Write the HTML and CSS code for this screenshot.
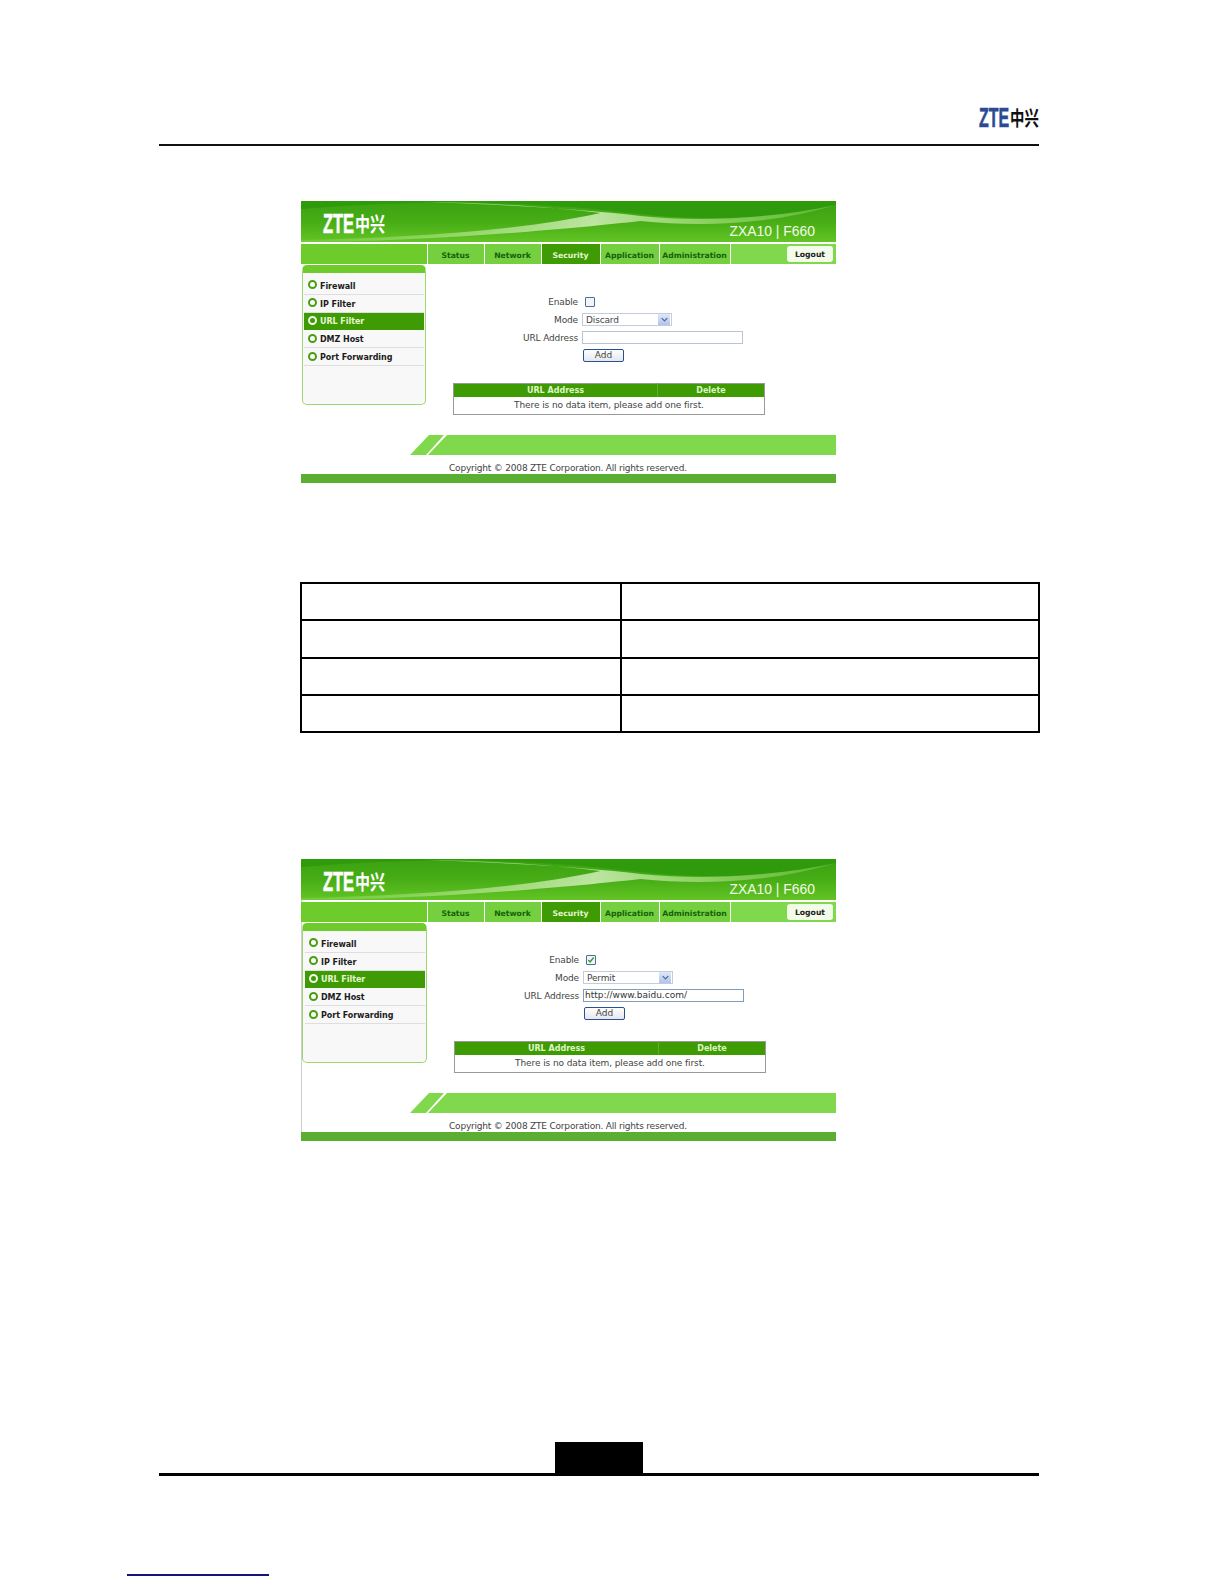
FILE: index.html
```html
<!DOCTYPE html>
<html lang="en">
<head>
<meta charset="utf-8">
<title>URL Filter</title>
<link rel="stylesheet" href="styles.css">
</head>
<body>
<div class="page">
  <header class="doc-head">
    <div class="logo doc-logo"><span class="logo-en">ZTE</span><span class="logo-cn">中兴</span></div>
  </header>

  <section class="shot shot-first">
    <div class="banner">
      <svg class="swoosh" viewBox="0 0 536 41" preserveAspectRatio="none" aria-hidden="true">
        <defs><linearGradient id="glossA" x1="0" x2="1" y1="0" y2="0"><stop offset="0" stop-color="#cdf2a8" stop-opacity=".15"/><stop offset=".55" stop-color="#e4f8cf" stop-opacity=".75"/><stop offset=".8" stop-color="#cdf2a8" stop-opacity=".45"/><stop offset="1" stop-color="#cdf2a8" stop-opacity=".2"/></linearGradient></defs>
        <path d="M0 8 C120 -2 230 0 320 11 C390 20 460 20 536 4 L536 0 L0 0Z" fill="#2f9a0c"/>
        <path d="M0 39 C100 37 220 30 300 12 C250 6 180 1 120 1 C190 3 280 8 340 15 C400 21 470 18 536 4 C470 24 400 26 340 20 C270 28 120 41 0 41Z" fill="url(#glossA)"/>
      </svg>
      <div class="logo brand"><span class="logo-en">ZTE</span><span class="logo-cn">中兴</span></div>
      <div class="model">ZXA10 | F660</div>
    </div>
    <nav class="nav">
      <div class="nav-lead"></div>
      <a class="tab tab-status">Status</a>
      <a class="tab tab-network">Network</a>
      <a class="tab tab-security active">Security</a>
      <a class="tab tab-application">Application</a>
      <a class="tab tab-admin">Administration</a>
      <div class="nav-rest"><button class="logout" type="button">Logout</button></div>
    </nav>
    <div class="content">
      <aside class="side">
        <ul class="menu">
          <li class="menu-item"><i class="ring"></i>Firewall</li>
          <li class="menu-item"><i class="ring"></i>IP Filter</li>
          <li class="menu-item current"><i class="ring"></i>URL Filter</li>
          <li class="menu-item"><i class="ring"></i>DMZ Host</li>
          <li class="menu-item"><i class="ring"></i>Port Forwarding</li>
        </ul>
      </aside>
      <main class="main">
        <div class="form">
          <label class="lbl">Enable</label>
          <div class="ctl"><span class="check"></span></div>
          <label class="lbl">Mode</label>
          <div class="ctl"><div class="select"><span>Discard</span><span class="arrow"><svg viewBox="0 0 10 6" width="7" height="5"><path d="M1 1l4 4 4-4" fill="none" stroke="#4a6aa5" stroke-width="1.8"/></svg></span></div></div>
          <label class="lbl">URL Address</label>
          <div class="ctl"><div class="text-input"></div></div>
          <span></span>
          <div class="ctl"><button class="add" type="button">Add</button></div>
        </div>
        <table class="rules">
          <thead><tr><th class="col-url">URL Address</th><th>Delete</th></tr></thead>
          <tbody><tr><td colspan="2">There is no data item, please add one first.</td></tr></tbody>
        </table>
      </main>
    </div>
    <div class="stripe">
      <svg viewBox="0 0 426 20" width="426" height="20" aria-hidden="true">
        <path d="M0 20L19 0H34L16 20Z" fill="#80d84c"/>
        <path d="M18 20L37 0H426V20Z" fill="#80d84c"/>
      </svg>
    </div>
    <div class="copy">Copyright © 2008 ZTE Corporation. All rights reserved.</div>
    <div class="base"></div>
  </section>

  <table class="data">
    <tr class="thin"><td class="data-a"></td><td></td></tr>
    <tr><td class="data-a"></td><td></td></tr>
    <tr><td class="data-a"></td><td></td></tr>
    <tr><td class="data-a"></td><td></td></tr>
  </table>

  <section class="shot shot-second">
    <div class="banner">
      <svg class="swoosh" viewBox="0 0 536 41" preserveAspectRatio="none" aria-hidden="true">
        <defs><linearGradient id="glossB" x1="0" x2="1" y1="0" y2="0"><stop offset="0" stop-color="#cdf2a8" stop-opacity=".15"/><stop offset=".55" stop-color="#e4f8cf" stop-opacity=".75"/><stop offset=".8" stop-color="#cdf2a8" stop-opacity=".45"/><stop offset="1" stop-color="#cdf2a8" stop-opacity=".2"/></linearGradient></defs>
        <path d="M0 8 C120 -2 230 0 320 11 C390 20 460 20 536 4 L536 0 L0 0Z" fill="#2f9a0c"/>
        <path d="M0 39 C100 37 220 30 300 12 C250 6 180 1 120 1 C190 3 280 8 340 15 C400 21 470 18 536 4 C470 24 400 26 340 20 C270 28 120 41 0 41Z" fill="url(#glossB)"/>
      </svg>
      <div class="logo brand"><span class="logo-en">ZTE</span><span class="logo-cn">中兴</span></div>
      <div class="model">ZXA10 | F660</div>
    </div>
    <nav class="nav">
      <div class="nav-lead"></div>
      <a class="tab tab-status">Status</a>
      <a class="tab tab-network">Network</a>
      <a class="tab tab-security active">Security</a>
      <a class="tab tab-application">Application</a>
      <a class="tab tab-admin">Administration</a>
      <div class="nav-rest"><button class="logout" type="button">Logout</button></div>
    </nav>
    <div class="content">
      <aside class="side">
        <ul class="menu">
          <li class="menu-item"><i class="ring"></i>Firewall</li>
          <li class="menu-item"><i class="ring"></i>IP Filter</li>
          <li class="menu-item current"><i class="ring"></i>URL Filter</li>
          <li class="menu-item"><i class="ring"></i>DMZ Host</li>
          <li class="menu-item"><i class="ring"></i>Port Forwarding</li>
        </ul>
      </aside>
      <main class="main">
        <div class="form">
          <label class="lbl">Enable</label>
          <div class="ctl"><span class="check"><svg viewBox="0 0 9 9" width="8" height="8"><path d="M1.5 4.5l2 2.2 4-5" fill="none" stroke="#2f9a2c" stroke-width="1.6"/></svg></span></div>
          <label class="lbl">Mode</label>
          <div class="ctl"><div class="select"><span>Permit</span><span class="arrow"><svg viewBox="0 0 10 6" width="7" height="5"><path d="M1 1l4 4 4-4" fill="none" stroke="#4a6aa5" stroke-width="1.8"/></svg></span></div></div>
          <label class="lbl">URL Address</label>
          <div class="ctl"><div class="text-input filled">http://www.baidu.com/</div></div>
          <span></span>
          <div class="ctl"><button class="add" type="button">Add</button></div>
        </div>
        <table class="rules">
          <thead><tr><th class="col-url">URL Address</th><th>Delete</th></tr></thead>
          <tbody><tr><td colspan="2">There is no data item, please add one first.</td></tr></tbody>
        </table>
      </main>
    </div>
    <div class="stripe">
      <svg viewBox="0 0 426 20" width="426" height="20" aria-hidden="true">
        <path d="M0 20L19 0H34L16 20Z" fill="#80d84c"/>
        <path d="M18 20L37 0H426V20Z" fill="#80d84c"/>
      </svg>
    </div>
    <div class="copy">Copyright © 2008 ZTE Corporation. All rights reserved.</div>
    <div class="base"></div>
  </section>

  <footer class="doc-foot"><div class="page-tab"></div></footer>
  <div class="source-link"></div>
</div>
</body>
</html>
```
FILE: styles.css
```css
* { box-sizing: border-box; }
html, body { margin: 0; padding: 0; background: #fff; }
body { font-family: "DejaVu Sans", Verdana, sans-serif; color: #222; }
.page { width: 1224px; height: 1584px; overflow: hidden; padding-left: 159px; }

.logo { display: flex; height: 20px; line-height: 20px; font-weight: 700; white-space: nowrap; }
.logo-en { display: block; width: 31px; font-family: "Liberation Sans", Arial, sans-serif; font-size: 27px; transform: scaleX(.61); transform-origin: left center; -webkit-text-stroke: .6px currentColor; }
.logo-cn { display: block; width: 30px; margin-left: 1px; font-family: "Noto Sans CJK SC", sans-serif; font-size: 20px; transform: scaleX(.75); transform-origin: left center; }

.doc-head { width: 880px; height: 146px; border-bottom: 2px solid #111; display: flex; justify-content: flex-end; padding-top: 108px; }
.doc-logo .logo-en { width: 30px; color: #2b4a94; transform: scaleX(.59); }
.doc-logo .logo-cn { width: 29px; color: #111; transform: scaleX(.72); }

.shot { width: 535px; margin-left: 142px; }
.shot-first { margin-top: 55px; }
.shot-second { margin-top: 126px; box-shadow: inset 1px 0 #cfcfcf; }

.banner { position: relative; height: 41px; overflow: hidden; background: linear-gradient(180deg, #3aa312 0%, #47ad16 50%, #62c424 100%); }
.swoosh { position: absolute; left: 0; top: 0; width: 100%; height: 100%; }
.brand { position: relative; padding-left: 22px; top: 13px; color: #fff; }
.model { position: absolute; right: 21px; top: 22px; font-family: "Liberation Sans", Arial, sans-serif; font-size: 13.9px; line-height: 16px; color: #f2fbe6; }

.nav { display: flex; height: 20px; margin-top: 2px; gap: 1px; font-size: 7.7px; font-weight: 700; }
.nav-lead { width: 126px; background: #6ecb2c; }
.tab { display: flex; align-items: center; justify-content: center; padding: 2px 1px 0 0; background: #75d03f; color: #14610a; white-space: nowrap; }
.tab-status, .tab-network { width: 56px; }
.tab-security, .tab-application { width: 58px; }
.tab-admin { width: 70px; }
.tab.active { background: #3e9b04; color: #e4f7d0; }
.nav-rest { flex: 1; display: flex; justify-content: flex-end; align-items: center; padding-right: 3px; background: #80d84c; }
.logout { width: 46px; height: 16px; padding: 0; border: 0; border-radius: 3px; background: #f3fbe9; color: #222; font: 700 7.7px "DejaVu Sans", sans-serif; }

.content { display: flex; height: 171px; }
.side { width: 124px; height: 140px; margin: 1px 0 0 1px; border: 1px solid #9bd670; border-top: 8px solid #6ecb2c; border-radius: 5px; background: #f8f8f8; padding: 4px 1px 0; }
.shot-second .side { width: 125px; padding-left: 2px; }
.menu { list-style: none; margin: 0; padding: 0; }
.menu-item { display: flex; align-items: center; height: 17.8px; padding: 2px 0 0 4px; border-bottom: 1px solid #dedede; font-size: 8px; font-weight: 700; color: #1c1c1c; letter-spacing: -.05px; white-space: nowrap; }
.menu-item.current { background: #3e9b04; color: #e6f7d2; border-bottom-color: #3e9b04; }
.ring { flex: none; width: 9px; height: 9px; margin: -3px 3px 0 0; border: 2px solid #479f10; border-radius: 50%; background: #fff; }
.current .ring { border-color: #f2faea; background: #3e9b04; }

.main { flex: 1; padding-top: 29px; font-size: 9px; color: #444; }
.form { display: grid; grid-template-columns: 152px auto; column-gap: 4px; grid-auto-rows: 17.8px; justify-content: start; }
.lbl { display: flex; align-items: center; justify-content: flex-end; letter-spacing: -.15px; padding-top: 1px; }
.ctl { display: flex; align-items: center; }
.check { display: flex; align-items: center; justify-content: center; width: 10px; height: 10px; margin-left: 3px; border: 1px solid #4c6c9e; background: #f2f4f8; border-radius: 1px; }
.select { display: flex; align-items: center; justify-content: space-between; width: 90px; height: 13px; padding: 0 1px 0 3px; border: 1px solid #c3ccdb; background: #fff; letter-spacing: -.15px; }
.arrow { display: flex; align-items: center; justify-content: center; width: 12px; height: 11px; background: linear-gradient(180deg, #dfe8f8, #b2c3ea); }
.text-input { width: 161px; height: 13px; padding: 0 1px; border: 1px solid #b9c4d4; background: #fff; line-height: 11px; white-space: nowrap; }
.text-input.filled { border-color: #7f9db9; color: #333; }
.add { width: 41px; height: 13px; margin-left: 1px; padding: 0; border: 1px solid #24538f; border-radius: 2px; background: linear-gradient(180deg, #fff, #e6e6ee); font: 9px "DejaVu Sans", sans-serif; color: #444; line-height: 10px; }

.rules { width: 312px; margin: 19px 0 0 27px; border-collapse: collapse; table-layout: fixed; border: 1px solid #999; font-size: 9px; }
.rules th { height: 13px; padding: 0; background: #3e9b04; color: #dff5c6; font-size: 8px; font-weight: 700; border: 0; border-left: 1px solid #5cae2c; }
.rules th.col-url { width: 204px; border-left: 0; }
.rules td { height: 18px; padding: 0; text-align: center; color: #444; background: #fff; letter-spacing: -.1px; }

.stripe { height: 20px; margin-left: 109px; }
.stripe svg { display: block; }
.copy { height: 19px; padding: 8px 0 0 148px; font-size: 9px; line-height: 11px; color: #444; letter-spacing: -.2px; white-space: nowrap; }
.base { height: 9px; background: #5aae32; }

.data { width: 740px; height: 150px; margin: 99px 0 0 141px; border-collapse: collapse; border: 2px solid #000; table-layout: fixed; }
.data td { border: 2px solid #000; height: 37.25px; padding: 0; }
.data .data-a { width: 320px; }
.data .thin td { border-bottom-width: 1px; }

.doc-foot { width: 880px; margin-top: 301px; padding-left: 396px; border-bottom: 3px solid #000; }
.page-tab { width: 88px; height: 31px; background: #000; }
.source-link { width: 142px; height: 2px; margin: 98px 0 0 -32px; background: #14147a; }
```
